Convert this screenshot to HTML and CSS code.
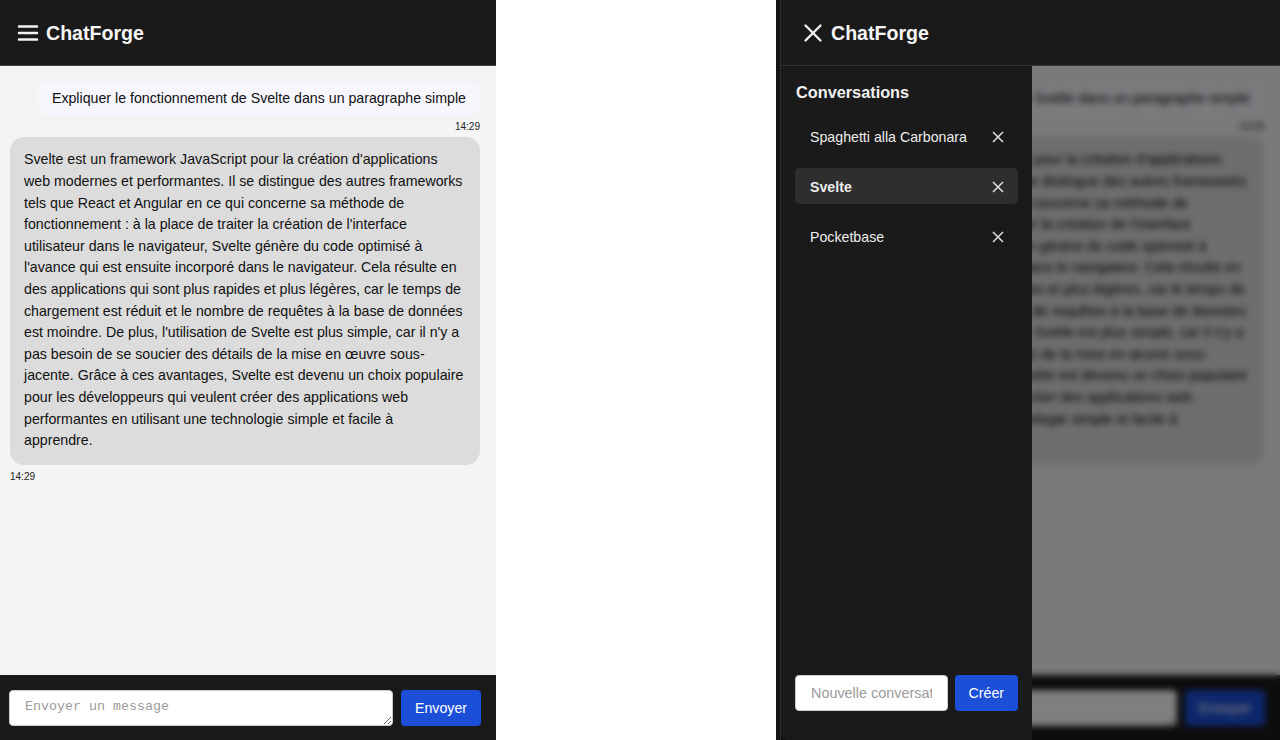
FILE: index.html
```html
<!DOCTYPE html>
<html lang="fr">
<head>
<meta charset="utf-8">
<title>ChatForge</title>
<link rel="stylesheet" href="styles.css">
</head>
<body>
<div class="stage">
  <section class="phone phone-left">
    <div class="app">
      <header class="topbar">
        <span class="icon-btn" aria-label="Menu">
          <svg viewBox="0 0 24 24" width="24" height="24"><path d="M3 5.5h18M3 12h18M3 18.5h18" stroke="currentColor" stroke-width="2.6" stroke-linecap="round" fill="none"/></svg>
        </span>
        <h1 class="brand">ChatForge</h1>
      </header>
      <div class="body">
        <main class="chat">
          <div class="msg msg-user">
            <div class="bubble">Expliquer le fonctionnement de Svelte dans un paragraphe simple</div>
            <div class="time">14:29</div>
          </div>
          <div class="msg msg-bot">
            <div class="bubble">Svelte est un framework JavaScript pour la création d'applications web modernes et performantes. Il se distingue des autres frameworks tels que React et Angular en ce qui concerne sa méthode de fonctionnement : à la place de traiter la création de l'interface utilisateur dans le navigateur, Svelte génère du code optimisé à l'avance qui est ensuite incorporé dans le navigateur. Cela résulte en des applications qui sont plus rapides et plus légères, car le temps de chargement est réduit et le nombre de requêtes à la base de données est moindre. De plus, l'utilisation de Svelte est plus simple, car il n'y a pas besoin de se soucier des détails de la mise en œuvre sous-jacente. Grâce à ces avantages, Svelte est devenu un choix populaire pour les développeurs qui veulent créer des applications web performantes en utilisant une technologie simple et facile à apprendre.</div>
            <div class="time">14:29</div>
          </div>
        </main>
        <footer class="composer">
          <textarea placeholder="Envoyer un message"></textarea>
          <button class="btn">Envoyer</button>
        </footer>
      </div>
    </div>
  </section>

  <section class="phone phone-right">
    <div class="app">
      <header class="topbar">
        <span class="icon-btn" aria-label="Fermer">
          <svg viewBox="0 0 24 24" width="24" height="24"><path d="M4.5 4.5l15 15M19.5 4.5l-15 15" stroke="currentColor" stroke-width="2.4" stroke-linecap="round" fill="none"/></svg>
        </span>
        <h1 class="brand">ChatForge</h1>
      </header>
      <div class="body">
        <main class="chat">
          <div class="msg msg-user">
            <div class="bubble">Expliquer le fonctionnement de Svelte dans un paragraphe simple</div>
            <div class="time">14:29</div>
          </div>
          <div class="msg msg-bot">
            <div class="bubble">Svelte est un framework JavaScript pour la création d'applications web modernes et performantes. Il se distingue des autres frameworks tels que React et Angular en ce qui concerne sa méthode de fonctionnement : à la place de traiter la création de l'interface utilisateur dans le navigateur, Svelte génère du code optimisé à l'avance qui est ensuite incorporé dans le navigateur. Cela résulte en des applications qui sont plus rapides et plus légères, car le temps de chargement est réduit et le nombre de requêtes à la base de données est moindre. De plus, l'utilisation de Svelte est plus simple, car il n'y a pas besoin de se soucier des détails de la mise en œuvre sous-jacente. Grâce à ces avantages, Svelte est devenu un choix populaire pour les développeurs qui veulent créer des applications web performantes en utilisant une technologie simple et facile à apprendre.</div>
            <div class="time">14:29</div>
          </div>
        </main>
        <footer class="composer">
          <textarea placeholder="Envoyer un message"></textarea>
          <button class="btn">Envoyer</button>
        </footer>
        <div class="overlay"></div>
        <aside class="sidebar">
          <h2 class="sidebar-title">Conversations</h2>
          <ul class="conv-list">
            <li class="conv"><span>Spaghetti alla Carbonara</span>
              <svg class="conv-x" viewBox="0 0 12 12" width="12" height="12"><path d="M1 1l10 10M11 1L1 11" stroke="currentColor" stroke-width="1.5" fill="none"/></svg></li>
            <li class="conv active"><span>Svelte</span>
              <svg class="conv-x" viewBox="0 0 12 12" width="12" height="12"><path d="M1 1l10 10M11 1L1 11" stroke="currentColor" stroke-width="1.5" fill="none"/></svg></li>
            <li class="conv"><span>Pocketbase</span>
              <svg class="conv-x" viewBox="0 0 12 12" width="12" height="12"><path d="M1 1l10 10M11 1L1 11" stroke="currentColor" stroke-width="1.5" fill="none"/></svg></li>
          </ul>
          <form class="new-conv">
            <input type="text" placeholder="Nouvelle conversation">
            <button class="btn" type="button">Créer</button>
          </form>
        </aside>
      </div>
    </div>
  </section>
</div>
</body>
</html>
```

FILE: styles.css
```css
* { box-sizing: border-box; }
html, body { margin: 0; height: 100%; }
body {
  background: #ffffff;
  font-family: "Liberation Sans", Arial, sans-serif;
  overflow: hidden;
}
.stage {
  display: flex;
  justify-content: space-between;
  height: 740px;
}
.phone { height: 740px; }
.phone-left { width: 496px; }
.phone-right {
  width: 504px;
  padding-left: 4px;
  background: #151515;
}
.app {
  height: 100%;
  display: flex;
  flex-direction: column;
  background: #f4f4f4;
}
.phone-right .app { border-left: 1px solid #2c2c2c; }

.topbar {
  height: 66px;
  flex: none;
  display: flex;
  align-items: center;
  gap: 6px;
  padding: 1px 16px 0;
  background: #1a1a1a;
  border-bottom: 1px solid #444;
}
.phone-right .topbar { padding-left: 20px; border-bottom-color: #333; }
.icon-btn {
  width: 24px;
  height: 24px;
  display: flex;
  color: #f2f2f2;
}
.brand {
  margin: 0;
  font-size: 19.6px;
  font-weight: 700;
  color: #f5f5f5;
}

.body {
  flex: 1;
  min-height: 0;
  display: flex;
  flex-direction: column;
  position: relative;
}
.chat {
  flex: 1;
  min-height: 0;
  padding: 17px 16px 0 10px;
  display: flex;
  flex-direction: column;
  gap: 3px;
  overflow: hidden;
}
.phone-right .chat { padding-left: 13px; }
.msg { display: flex; flex-direction: column; }
.msg-user { align-items: flex-end; }
.msg-bot { align-items: flex-start; }
.bubble {
  font-size: 14.2px;
  line-height: 21.6px;
  color: #111;
}
.msg-user .bubble {
  padding: 5px 14px;
  background: #f6f6fc;
  border-radius: 8px;
}
.msg-bot .bubble {
  padding: 12.8px 15.2px 12.8px 14px;
  background: #dcdcdc;
  border-radius: 14px;
}
.time {
  margin-top: 5px;
  font-size: 10px;
  line-height: 14px;
  color: #222;
}

.composer {
  height: 65px;
  flex: none;
  display: flex;
  align-items: flex-start;
  gap: 8px;
  padding: 15px 15px 0 9px;
  background: #1a1a1a;
}
.composer textarea {
  flex: 1;
  height: 36px;
  min-width: 0;
  padding: 8px 15px;
  border: 1px solid #ccc;
  border-radius: 4px;
  background: #fff;
  font: 13.33px "Liberation Mono", monospace;
  outline: none;
}
.composer textarea::placeholder { color: #9a9a9a; }
.btn {
  height: 36px;
  flex: none;
  padding: 0 14px;
  border: 0;
  border-radius: 4px;
  background: #1b4fd8;
  color: #fff;
  font: 14.2px "Liberation Sans", Arial, sans-serif;
}

.overlay {
  position: absolute;
  inset: 0;
  background: rgba(0, 0, 0, 0.5);
  backdrop-filter: blur(3px);
  z-index: 1;
}
.sidebar {
  position: absolute;
  top: 0;
  left: 0;
  bottom: 0;
  width: 251px;
  z-index: 2;
  display: flex;
  flex-direction: column;
  padding: 14px 14px 29px;
  background: #1a1a1a;
  border-bottom-left-radius: 6px;
}
.sidebar-title {
  margin: 0 0 14px 1px;
  font-size: 16.3px;
  line-height: 24px;
  font-weight: 700;
  color: #f2f2f2;
}
.conv-list {
  list-style: none;
  margin: 0;
  padding: 0;
  display: flex;
  flex-direction: column;
  gap: 14px;
}
.conv {
  height: 36px;
  display: flex;
  align-items: center;
  justify-content: space-between;
  padding: 1px 14px 0 15px;
  border-radius: 5px;
  font-size: 14.2px;
  color: #ececec;
}
.conv.active { background: #2e2e2e; font-weight: 700; }
.conv-x { color: #e0e0e0; flex: none; }
.new-conv {
  margin: auto 0 0;
  display: flex;
  gap: 7px;
}
.new-conv input {
  flex: 1;
  min-width: 0;
  height: 36px;
  padding: 0 15px;
  border: 1px solid #ccc;
  border-radius: 4px;
  background: #fff;
  font: 14.4px "Liberation Sans", Arial, sans-serif;
  outline: none;
}
.new-conv input::placeholder { color: #9a9a9a; }
```
